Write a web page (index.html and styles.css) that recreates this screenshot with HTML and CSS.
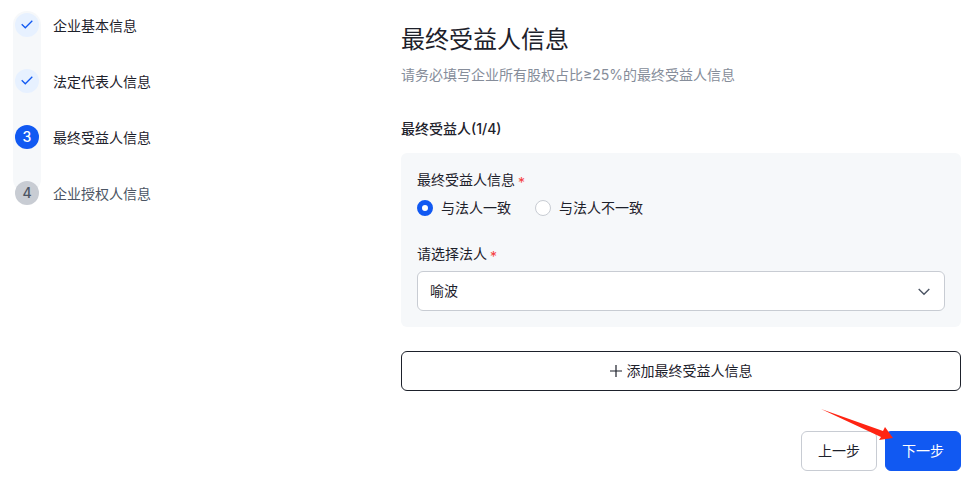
FILE: index.html
```html
<!DOCTYPE html>
<html lang="zh-CN">
<head>
<meta charset="utf-8">
<meta name="viewport" content="width=device-width, initial-scale=1">
<title>最终受益人信息</title>
<link rel="stylesheet" href="styles.css">
</head>
<body>
<div class="page">
  <nav class="sidebar">
    <ol class="steps">
      <li class="step">
        <span class="step-badge done"><svg width="12" height="10" viewBox="0 0 12 10" fill="none" stroke="currentColor" stroke-width="1.3"><path d="M.7 4.2 4.3 7.8 11.3.8"/></svg></span>
        <span class="step-name">企业基本信息</span>
      </li>
      <li class="step">
        <span class="step-badge done"><svg width="12" height="10" viewBox="0 0 12 10" fill="none" stroke="currentColor" stroke-width="1.3"><path d="M.7 4.2 4.3 7.8 11.3.8"/></svg></span>
        <span class="step-name">法定代表人信息</span>
      </li>
      <li class="step" aria-current="step">
        <span class="step-badge current">3</span>
        <span class="step-name">最终受益人信息</span>
      </li>
      <li class="step pending">
        <span class="step-badge">4</span>
        <span class="step-name">企业授权人信息</span>
      </li>
    </ol>
  </nav>
  <main class="content">
    <h1>最终受益人信息</h1>
    <p class="subtitle">请务必填写企业所有股权占比≥25%的最终受益人信息</p>
    <form>
      <h2>最终受益人(1/4)</h2>
      <div class="panel">
        <fieldset>
          <legend class="field-label">最终受益人信息<span class="required">*</span></legend>
          <div class="radios">
            <label class="radio"><input type="radio" name="owner" checked><span>与法人一致</span></label>
            <label class="radio"><input type="radio" name="owner"><span>与法人不一致</span></label>
          </div>
        </fieldset>
        <label class="field-label" for="legal-person">请选择法人<span class="required">*</span></label>
        <div class="select-box">
          <select id="legal-person"><option>喻波</option></select>
          <svg class="chevron" width="12" height="8" viewBox="0 0 12 8" fill="none" stroke="currentColor" stroke-width="1.4"><path d="M.7 1 6 6.3 11.3 1"/></svg>
        </div>
      </div>
      <button class="button add" type="button"><svg width="12" height="12" viewBox="0 0 12 12" fill="none" stroke="currentColor" stroke-width="1.2"><path d="M6 0v12M0 6h12"/></svg>添加最终受益人信息</button>
      <div class="actions">
        <button class="button" type="button">上一步</button>
        <div class="next">
          <button class="button primary" type="submit">下一步</button>
          <svg class="pointer" width="72" height="32" viewBox="0 0 72 32" fill="#ff2412" aria-hidden="true"><path d="M0 0 62 22 64 18 72 29 58 31 60 28Z"/></svg>
        </div>
      </div>
    </form>
  </main>
</div>
</body>
</html>
```
FILE: styles.css
```css
* {
  box-sizing: border-box;
}

body {
  margin: 0;
  background: #fff;
  color: #1d212b;
  font: 14px/22px Inter, "Noto Sans CJK SC", sans-serif;
}

.page {
  display: flex;
  justify-content: space-between;
  gap: 24px;
  padding: 11px 19px 12px 13px;
}

.sidebar {
  flex: none;
}

.steps {
  position: relative;
  isolation: isolate;
  display: grid;
  gap: 32px;
  margin: 0;
  padding: 2px;
  list-style: none;
}

.steps::before {
  content: "";
  position: absolute;
  z-index: -1;
  top: 0;
  bottom: 14px;
  left: 0;
  width: 28px;
  border-radius: 14px;
  background: #f6f8fa;
}

.step {
  display: flex;
  align-items: center;
  gap: 14px;
  height: 24px;
}

.step-name {
  padding-top: 2px;
}

.step-badge {
  display: grid;
  place-items: center;
  width: 24px;
  height: 24px;
  border-radius: 50%;
  background: #c8ccd3;
  color: #4c5564;
  font-weight: 500;
}

.step-badge.done {
  background: #e7f1ff;
  color: #1159f2;
}

.step-badge.current {
  background: #1159f2;
  color: #fff;
}

.pending {
  color: #4c5564;
}

.content {
  flex: 0 1 560px;
  padding-top: 13px;
}

h1 {
  margin: 0 0 8px;
  font-size: 24px;
  font-weight: 400;
  line-height: 32px;
}

.subtitle {
  margin: 0 0 32px;
  color: #868d9a;
}

h2 {
  margin: 0 0 13px;
  font-size: 14px;
  font-weight: 500;
}

.panel {
  padding: 16px;
  border-radius: 6px;
  background: #f6f8fa;
}

fieldset {
  margin: 0 0 24px;
  padding: 0;
  border: 0;
}

.field-label {
  display: block;
  margin-bottom: 6px;
  padding: 0;
}

.required {
  margin-left: 3px;
  color: #f53f3f;
  line-height: 1;
  vertical-align: -3px;
}

.radios {
  display: flex;
  gap: 24px;
}

.radio {
  display: flex;
  align-items: center;
  gap: 8px;
}

.radio input {
  appearance: none;
  width: 16px;
  height: 16px;
  margin: 0;
  border: 1px solid #c8ccd3;
  border-radius: 50%;
  background: #fff;
}

.radio input:checked {
  border: 5px solid #1159f2;
}

.select-box {
  position: relative;
}

select {
  display: block;
  appearance: none;
  width: 100%;
  height: 40px;
  padding: 0 12px;
  border: 1px solid #c8ccd3;
  border-radius: 6px;
  background: #fff;
  color: inherit;
  font: inherit;
}

.chevron {
  position: absolute;
  top: 17px;
  right: 15px;
  color: #4c5564;
  pointer-events: none;
}

.button {
  height: 40px;
  padding: 0 16px;
  border: 1px solid #c8ccd3;
  border-radius: 6px;
  background: #fff;
  color: inherit;
  font: inherit;
}

.add {
  display: flex;
  align-items: center;
  justify-content: center;
  gap: 5px;
  width: 100%;
  margin: 24px 0 40px;
  border-color: #1d212b;
}

.actions {
  display: flex;
  justify-content: flex-end;
  gap: 8px;
}

.next {
  position: relative;
}

.primary {
  border-color: #1159f2;
  background: #1159f2;
  color: #fff;
}

.pointer {
  position: absolute;
  right: 68px;
  bottom: 30px;
  pointer-events: none;
}
```
